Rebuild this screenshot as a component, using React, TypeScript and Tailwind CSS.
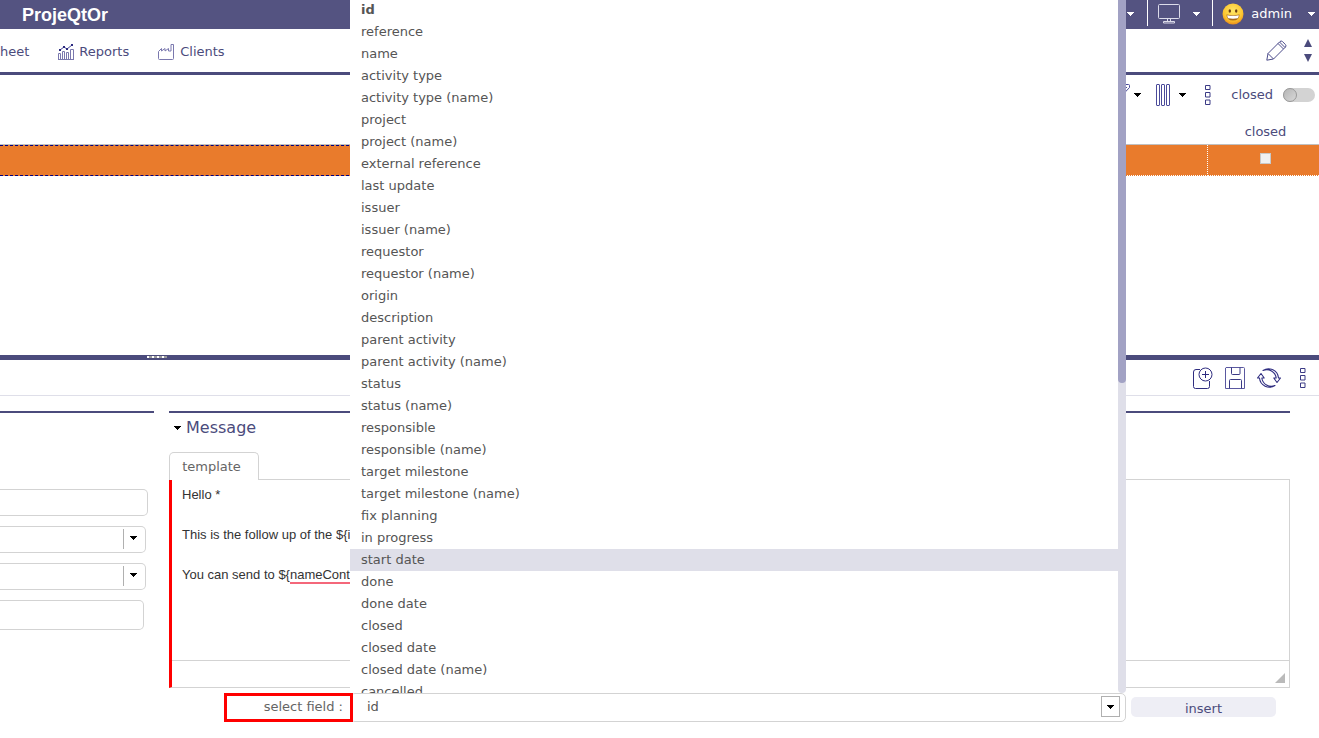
import { ReactNode } from "react";

const fields = [
  "id",
  "reference",
  "name",
  "activity type",
  "activity type (name)",
  "project",
  "project (name)",
  "external reference",
  "last update",
  "issuer",
  "issuer (name)",
  "requestor",
  "requestor (name)",
  "origin",
  "description",
  "parent activity",
  "parent activity (name)",
  "status",
  "status (name)",
  "responsible",
  "responsible (name)",
  "target milestone",
  "target milestone (name)",
  "fix planning",
  "in progress",
  "start date",
  "done",
  "done date",
  "closed",
  "closed date",
  "closed date (name)",
  "cancelled",
];

export default function App() {
  return (
    <div className="min-h-screen overflow-hidden bg-white font-['DejaVu_Sans',Verdana,sans-serif] text-[13px] leading-5 text-[#4b4b7c]">
      <TopBar />
      <NavBar />
      <ListPanel />
      <Splitter />
      <DetailToolbar />
      <main className="flex gap-[15px] pt-[15px] pr-[29px]">
        <SideFields />
        <MessageSection />
      </main>
    </div>
  );
}

function TopBar() {
  return (
    <header className="flex h-[29px] items-center justify-between bg-[#545381] pr-1 pl-[22px] text-white">
      <h1 className="font-['Liberation_Sans',Arial,sans-serif] text-[18px] font-bold">ProjeQtOr</h1>
      <div className="flex h-full items-center pb-[2px]">
        <IconButton label="notifications">
          <Caret />
        </IconButton>
        <span className="mr-[10px] ml-[13px] h-[26px] w-px self-start bg-white" />
        <IconButton label="screen layout">
          <ScreenIcon />
          <span className="w-[13px]" />
          <Caret />
        </IconButton>
        <span className="mr-[9px] ml-3 h-[26px] w-px self-start bg-white" />
        <button className="flex items-center">
          <SmileyIcon />
          <span className="mr-4 ml-[7px]">admin</span>
          <Caret />
        </button>
      </div>
    </header>
  );
}

function NavBar() {
  return (
    <nav className="flex h-[46px] items-center justify-between border-b-3 border-[#4b4b7c] pr-[7px]">
      <div className="flex items-center gap-[29px] pt-[2px]">
        <a href="#timesheet">heet</a>
        <a href="#reports" className="flex items-center gap-[5px]">
          <ReportsIcon />
          Reports
        </a>
        <a href="#clients" className="flex items-center gap-[5px]">
          <ClientsIcon />
          Clients
        </a>
      </div>
      <div className="flex items-center gap-[17px]">
        <IconButton label="customize">
          <PencilIcon />
        </IconButton>
        <div className="flex flex-col gap-[7px]">
          <IconButton label="previous">
            <svg width="8" height="8" viewBox="0 0 8 8" fill="#4b4b7c">
              <path d="M4 0 8 8H0Z" />
            </svg>
          </IconButton>
          <IconButton label="next">
            <svg width="8" height="8" viewBox="0 0 8 8" fill="#4b4b7c">
              <path d="M0 0H8L4 8Z" />
            </svg>
          </IconButton>
        </div>
      </div>
    </nav>
  );
}

function ListPanel() {
  return (
    <section className="h-[280px]">
      <div className="flex h-10 items-center justify-end pr-1">
        <IconButton label="filter">
          <FilterIcon />
          <span className="w-1" />
          <span className="text-black">
            <Caret />
          </span>
        </IconButton>
        <span className="w-[15px]" />
        <IconButton label="columns">
          <ColumnsIcon />
          <span className="w-2" />
          <span className="text-black">
            <Caret />
          </span>
        </IconButton>
        <span className="w-[19px]" />
        <IconButton label="more actions">
          <DotsIcon />
        </IconButton>
        <label htmlFor="showClosed" className="mr-[10px] ml-5">closed</label>
        <input
          id="showClosed"
          type="checkbox"
          role="switch"
          className="h-[14px] w-8 appearance-none rounded-full bg-[#d3d3d3] before:block before:size-[14px] before:rounded-full before:border before:border-[#999] before:bg-linear-to-br before:from-[#b5b5b5] before:to-[#d8d8d8] before:content-['']"
        />
      </div>
      <table className="w-full table-fixed border-separate border-spacing-0">
        <thead>
          <tr className="h-[30px]">
            <th className="w-1/2 border-b border-[#c0c0c0]" />
            <th className="border-b border-[#c0c0c0]" />
            <th className="w-[111px] border-b border-[#c0c0c0] p-0 pt-1 pl-1 font-normal">closed</th>
          </tr>
        </thead>
        <tbody>
          <tr className="h-[31px] bg-[#e97b2c]">
            <td className="border-y border-dashed border-[#000080]" />
            <td className="border-r border-b border-dotted border-white" />
            <td className="border-b border-dotted border-white p-0 pl-1">
              <input
                type="checkbox"
                aria-label="closed"
                className="mx-auto mb-1 block size-[11px] appearance-none border border-[#c8c8c8] bg-[#f0f0f0]"
              />
            </td>
          </tr>
        </tbody>
      </table>
    </section>
  );
}

function Splitter() {
  return (
    <div className="flex h-[5px] items-start bg-[#4b4b7c] pt-px pl-[147px]">
      <span className="h-[2px] w-5 bg-[repeating-linear-gradient(90deg,#fff_0,#fff_2px,#9a9a9a_2px,#9a9a9a_5px)]" />
    </div>
  );
}

function DetailToolbar() {
  return (
    <div className="flex h-9 items-center justify-end gap-[19px] border-b border-[#dfdfe9] pr-[13px]">
      <div className="flex items-center gap-3">
        <IconButton label="new">
          <NewIcon />
        </IconButton>
        <IconButton label="save">
          <SaveIcon />
        </IconButton>
        <IconButton label="refresh">
          <RefreshIcon />
        </IconButton>
      </div>
      <IconButton label="more">
        <DotsIcon />
      </IconButton>
    </div>
  );
}

function SideFields() {
  return (
    <section className="w-[154px] border-t-2 border-[#4b4b7c] pt-[76px]">
      <input aria-label="name" className="block h-[27px] w-[148px] rounded-r-[5px] border border-l-0 border-[#d3d3d3]" />
      <SideSelect label="element" />
      <SideSelect label="type" />
      <input aria-label="comment" className="mt-[10px] block h-[30px] w-36 rounded-r-[5px] border border-l-0 border-[#d3d3d3]" />
    </section>
  );
}

function SideSelect({ label }: { label: string }) {
  return (
    <div className="relative mt-[10px] w-[146px] text-black">
      <select
        aria-label={label}
        className="block h-[27px] w-full appearance-none rounded-r-[5px] border border-l-0 border-[#d3d3d3]"
      />
      <span className="pointer-events-none absolute top-[3px] right-[9px] flex h-5 w-[14px] items-center justify-end border-l border-[#b0b0b0] pb-[2px]">
        <Caret />
      </span>
    </div>
  );
}

function MessageSection() {
  return (
    <section className="flex-1 border-t-2 border-[#4b4b7c]">
      <h2 className="flex h-[29px] items-center gap-[5px] pt-px pl-[5px] text-base">
        <span className="text-black">
          <Caret />
        </span>
        Message
      </h2>
      <button className="relative mt-[10px] block h-7 w-[90px] rounded-t-[5px] border border-b-0 border-[#d3d3d3] bg-white pr-[5px] text-[#656565]">
        template
      </button>
      <div className="-mt-px border border-l-3 border-[#d3d3d3] border-l-[#ff0000]">
        <div
          contentEditable
          suppressContentEditableWarning
          role="textbox"
          aria-label="template"
          className="h-[180px] px-[10px] pt-[5px] font-['Liberation_Sans',Arial,sans-serif] whitespace-nowrap text-[#333]"
        >
          <p className="mb-5">Hello *</p>
          <p className="mb-5">{"This is the follow up of the ${i"}</p>
          <p>
            {"You can send to ${"}
            <span className="border-b-2 border-[#f4677a]">nameCont</span>
          </p>
        </div>
        <div className="flex h-[27px] items-end justify-end border-t border-[#d3d3d3] p-1">
          <svg width="10" height="10" viewBox="0 0 10 10" fill="#bababa">
            <path d="M10 0V10H0Z" />
          </svg>
        </div>
      </div>
      <div className="mt-[5px] flex items-start pr-[14px] pl-[55px]">
        <label
          htmlFor="field"
          className="z-10 -mr-[3px] h-[29px] w-[129px] border-3 border-[#ff0000] pt-px pr-[7px] text-right text-[#656565]"
        >
          select field :
        </label>
        <FieldSelect />
        <button className="mt-1 ml-[5px] h-5 w-[145px] rounded-[5px] bg-[#eeeef5] pt-[2px]">insert</button>
      </div>
    </section>
  );
}

function FieldSelect() {
  return (
    <div className="relative flex-1 text-[#555]">
      <select
        id="field"
        className="block h-[29px] w-full appearance-none rounded-[5px] border border-[#d3d3d3] bg-white pb-[2px] pl-4"
      >
        {fields.map((field) => (
          <option key={field}>{field}</option>
        ))}
      </select>
      <span className="pointer-events-none absolute top-[3px] right-[6px] flex h-[21px] w-[19px] items-center justify-center border border-[#b0b0b0] text-black">
        <Caret />
      </span>
      <div className="absolute bottom-full flex h-[694px] w-full overflow-hidden bg-white">
        <ul role="listbox" aria-label="fields" className="flex-1 leading-[22px]">
          {fields.map((field) => (
            <li
              key={field}
              role="option"
              aria-selected={field === "id"}
              className={
                "h-[22px] pl-[11px] " +
                (field === "id" ? "font-bold" : field === "start date" ? "bg-[#dfdfe9]" : "")
              }
            >
              {field}
            </li>
          ))}
        </ul>
        <div className="w-2 rounded-b-full bg-[#dfdfe9]">
          <div className="h-[384px] rounded-b-full bg-[#a2a2c4]" />
        </div>
      </div>
    </div>
  );
}

function IconButton({ label, children }: { label: string; children: ReactNode }) {
  return (
    <button aria-label={label} className="flex items-center">
      {children}
    </button>
  );
}

function Caret() {
  return (
    <svg width="7" height="4" viewBox="0 0 7 4" fill="currentColor" shapeRendering="crispEdges">
      <path d="M0 0H7V1H6V2H5V3H4V4H3V3H2V2H1V1H0Z" />
    </svg>
  );
}

function ScreenIcon() {
  return (
    <svg width="22" height="20" viewBox="0 0 22 20" fill="none" stroke="#dcdcea">
      <path d="M1.5.5h19q1 0 1 1v12q0 1-1 1h-19q-1 0-1-1v-12q0-1 1-1Z" />
      <path d="M9.500 14.500v3M12.500 14.500v3M5.500 19v-1.500h11v1.500Z" />
    </svg>
  );
}

function SmileyIcon() {
  return (
    <svg width="22" height="22" viewBox="0 0 22 22">
      <defs>
        <radialGradient id="face" cx="50%" cy="35%" r="65%">
          <stop offset="0" stopColor="#ffe768" />
          <stop offset=".7" stopColor="#fdc62f" />
          <stop offset="1" stopColor="#e88d1c" />
        </radialGradient>
      </defs>
      <circle cx="11" cy="11" r="10.500" fill="url(#face)" />
      <ellipse cx="7.800" cy="8" rx="1.200" ry="1.800" fill="#6b3f13" />
      <ellipse cx="14.200" cy="8" rx="1.200" ry="1.800" fill="#6b3f13" />
      <path d="M4.500 11.500q6.500 1.500 13 0 0 6-6.500 6t-6.500-6Z" fill="#a86a1c" />
      <path d="M5.200 12.200q5.800 1.300 11.600 0-.1 1.800-1 3-4.800.9-9.600 0-.9-1.200-1-3Z" fill="#fff" />
    </svg>
  );
}

function ReportsIcon() {
  return (
    <svg width="16" height="16" viewBox="0 0 16 16" fill="none" stroke="#7a78ae">
      <path d="M.5 15.500v-6h2v6ZM4.500 15.500v-8h2v8ZM8.500 15.500v-7h2v7ZM12.500 15.500v-10h3v10ZM0 15.500h16" />
      <path d="M2 6 6 3l3 2 5-4" stroke="#4b4b9a" />
      <path d="M1 5h2v2H1ZM5 2h2v2H5ZM8 4h2v2H8ZM13 0h2v2h-2Z" fill="#2b2a80" stroke="none" />
    </svg>
  );
}

function ClientsIcon() {
  return (
    <svg width="17" height="16" viewBox="0 0 17 16" fill="none" stroke="#7a78ae">
      <path d="M.5 14.500V7.500L3.500 4.500v2.500l3.500-2.500v2.500l3.500-2.500v2.500h2.500V.5h2.500v14q0 1-1 1h-13q-1 0-1-1Z" />
    </svg>
  );
}

function PencilIcon() {
  return (
    <svg width="21" height="21" viewBox="0 0 21 21" fill="none" stroke="#4b4b8a" strokeLinejoin="round">
      <path d="M.8 20.200 2 13.500 14 1.500Q15.200.5 16.400 1.500L19.500 4.600Q20.500 5.800 19.500 7L7.500 19ZM2 13.500 7.500 19M12 3.500l5.500 5.500M13.500 2l5.500 5.500" />
    </svg>
  );
}

function FilterIcon() {
  return (
    <svg width="20" height="22" viewBox="0 0 20 22" fill="none" stroke="#4b4b9a">
      <path d="M1.500.5h17q1 0 1 1v2L12.500 11v8l-4 2.500V11L.5 3.500v-2q0-1 1-1Z" />
      <path d="M3 3.500h14" />
    </svg>
  );
}

function ColumnsIcon() {
  return (
    <svg width="15" height="22" viewBox="0 0 15 22" fill="none" stroke="#4b4b9a">
      <rect x=".5" y=".5" width="3" height="21" rx=".5" />
      <rect x="5.500" y=".5" width="3" height="21" rx=".5" />
      <rect x="10.500" y=".5" width="3" height="21" rx=".5" />
    </svg>
  );
}

function DotsIcon() {
  return (
    <svg width="6" height="20" viewBox="0 0 6 20" fill="none" stroke="#3b3a85">
      <path d="M.5.5h4.500v4H.5ZM.5 7.500h4.500v4.500H.5ZM.5 15h4.500v4.500H.5Z" />
    </svg>
  );
}

function NewIcon() {
  return (
    <svg width="20" height="22" viewBox="0 0 20 22" fill="none" stroke="#2f2d80">
      <path d="M7 2.500H3Q.5 2.500.5 5v14.500q0 2 2 2h12q2 0 2-2V14" />
      <circle cx="12.500" cy="7.500" r="6.500" />
      <path d="M12.500 4v7M9 7.500h7" />
    </svg>
  );
}

function SaveIcon() {
  return (
    <svg width="20" height="22" viewBox="0 0 20 22" fill="none" stroke="#5a58a0">
      <path d="M1 .5h17.500q1 0 1 1v20H.5V1Z" />
      <path d="M6.500.5v6q0 1 1 1h6.500q1 0 1-1v-6M4.500 21.500v-8q0-1 1-1h10q1 0 1 1v8" stroke="#3b3a85" />
    </svg>
  );
}

function RefreshIcon() {
  return (
    <svg width="24" height="22" viewBox="0 0 24 22" fill="none" stroke="#2f2d80" strokeWidth="1.100" strokeLinejoin="round">
      <path d="M6 3.500A10 10 0 0 1 21.500 11h2L20 15.500 16.800 11h2.400A9.500 9.500 0 0 0 6 3.500Z" />
      <path d="M18 18.500A10 10 0 0 1 2.500 11h-2L4 6.500 7.200 11H4.800A9.500 9.500 0 0 0 18 18.500Z" />
    </svg>
  );
}
